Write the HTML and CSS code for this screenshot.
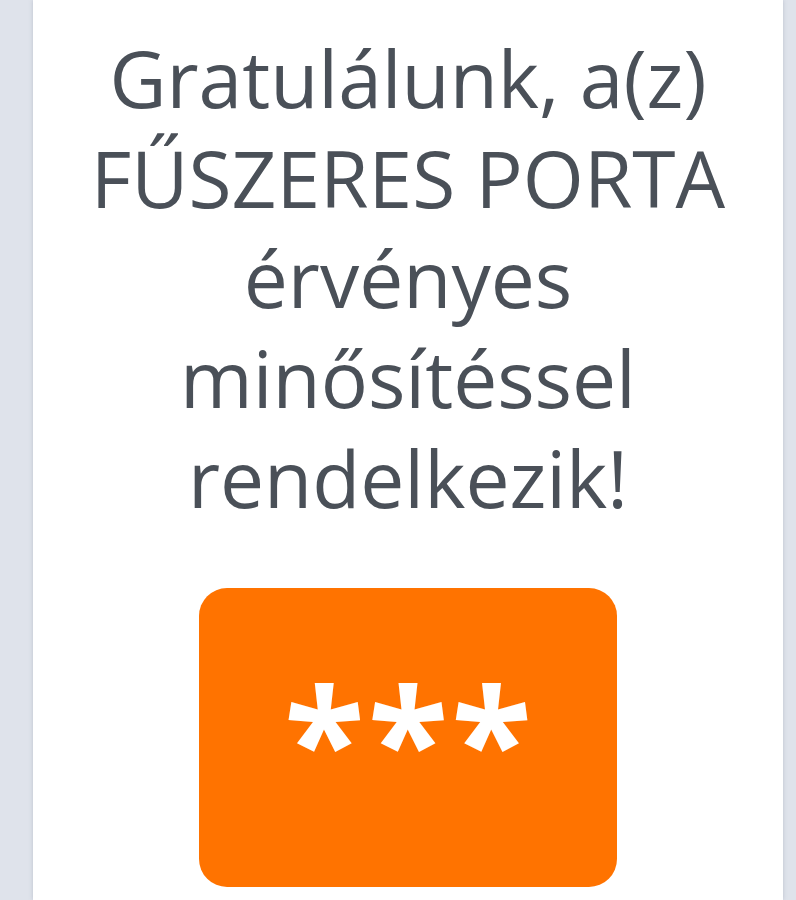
FILE: index.html
```html
<!DOCTYPE html>
<html lang="hu">
<head>
<meta charset="utf-8">
<link rel="stylesheet" href="styles.css">
</head>
<body>
<div class="page">
  <div class="card">
    <h1 class="title">Gratulálunk, a(z) FŰSZERES PORTA érvényes minősítéssel rendelkezik!</h1>
    <div class="badge">***</div>
  </div>
</div>
</body>
</html>
```
FILE: styles.css
```css
html, body {
  margin: 0;
  padding: 0;
  background: #dfe3eb;
  height: 100%;
  overflow: hidden;
}
.page {
  display: flex;
  justify-content: flex-start;
  padding-left: 33px;
  width: 796px;
  box-sizing: border-box;
}
.card {
  width: 750px;
  height: 900px;
  background: #ffffff;
  box-shadow: 0 0 4px rgba(120, 125, 150, 0.35);
  display: flex;
  flex-direction: column;
  align-items: center;
  padding-top: 28px;
  box-sizing: border-box;
}
.title {
  margin: 0;
  font-family: "Open Sans", sans-serif;
  font-weight: 400;
  font-size: 78.5px;
  line-height: 100px;
  color: #4a5058;
  text-align: center;
  width: 660px;
}
.badge {
  margin-top: 60px;
  width: 418px;
  height: 299px;
  border-radius: 28px;
  background: #ff7300;
  color: #ffffff;
  font-family: "Open Sans", sans-serif;
  font-weight: 700;
  font-size: 148px;
  letter-spacing: 3px;
  text-indent: 3px;
  display: flex;
  align-items: center;
  justify-content: center;
  flex-shrink: 0;
}
```
